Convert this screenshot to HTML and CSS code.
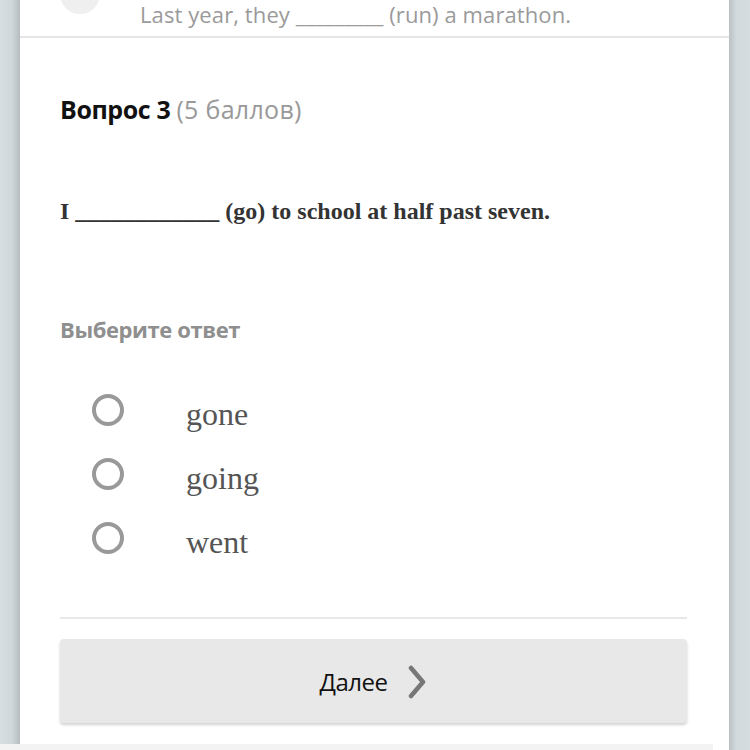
FILE: index.html
```html
<!DOCTYPE html>
<html>
<head>
<meta charset="utf-8">
<link rel="stylesheet" href="styles.css">
</head>
<body>
<div class="page">
  <div class="side left"></div>
  <main class="card">
    <div class="prev">
      <span class="prev-dot"></span>
      <span class="prev-text">Last year, they _________ (run) a marathon.</span>
    </div>
    <section class="question">
      <h2 class="q-title">Вопрос 3 <span class="q-points">(5 баллов)</span></h2>
      <p class="q-text">I ____________ (go) to school at half past seven.</p>
      <div class="q-label">Выберите ответ</div>
      <ul class="options">
        <li class="option"><span class="radio"></span><span class="opt-text">gone</span></li>
        <li class="option"><span class="radio"></span><span class="opt-text">going</span></li>
        <li class="option"><span class="radio"></span><span class="opt-text">went</span></li>
      </ul>
      <div class="divider"></div>
      <button class="next">Далее
        <svg class="chev" width="20" height="34" viewBox="0 0 20 34"><path d="M4 3 L16 17 L4 31" fill="none" stroke="#777" stroke-width="4.5" stroke-linecap="round" stroke-linejoin="round"/></svg>
      </button>
    </section>
    <div class="bottom-strip"></div>
  </main>
  <div class="side right"></div>
</div>
</body>
</html>
```

FILE: styles.css
```css
html, body {
  margin: 0;
  padding: 0;
  background: #ffffff;
}
.page {
  display: flex;
  width: 750px;
  height: 750px;
  overflow: hidden;
}
.side {
  width: 20px;
  flex: none;
}
.left {
  background: linear-gradient(to right, #d8dfe2 0%, #d0d7da 60%, #b4bcbf 100%);
}
.right {
  width: 21px;
  background: linear-gradient(to right, #b9c1c4 0%, #d2d9dc 35%, #d6dde0 100%);
}
.card {
  flex: 1;
  background: #fff;
  display: flex;
  flex-direction: column;
  font-family: "Open Sans", sans-serif;
}
.prev {
  height: 37px;
  border-bottom: 2px solid #e6e6e6;
  display: flex;
  align-items: flex-end;
  position: relative;
}
.prev-dot {
  position: absolute;
  left: 40px;
  top: -26px;
  width: 40px;
  height: 40px;
  border-radius: 50%;
  background: #efefef;
}
.prev-text {
  margin-left: 120px;
  margin-bottom: 10px;
  font-size: 22px;
  color: #9a9a9a;
  letter-spacing: 0.1px;
  line-height: 24px;
}
.question {
  padding: 0 42px 0 40px;
  display: flex;
  flex-direction: column;
}
.q-title {
  margin: 52px 0 0;
  font-size: 25px;
  font-weight: 700;
  color: #111;
  line-height: 38px;
  letter-spacing: -0.4px;
}
.q-points {
  font-weight: 400;
  color: #999;
  letter-spacing: 0.3px;
}
.q-text {
  margin: 69px 0 0;
  font-family: "Liberation Serif", serif;
  font-weight: 700;
  font-size: 24px;
  color: #333;
  line-height: 28px;
}
.q-label {
  margin-top: 89px;
  font-size: 22px;
  font-weight: 700;
  color: #8f8f8f;
  line-height: 30px;
  letter-spacing: -0.4px;
}
.options {
  list-style: none;
  margin: 48px 0 0;
  padding: 0;
  display: flex;
  flex-direction: column;
  gap: 28px;
}
.option {
  display: flex;
  align-items: center;
  height: 36px;
}
.radio {
  width: 24px;
  height: 24px;
  border: 4px solid #999;
  border-radius: 50%;
  margin-left: 32px;
  box-sizing: content-box;
  flex: none;
}
.opt-text {
  margin-left: 62px;
  font-family: "Liberation Serif", serif;
  font-size: 32px;
  color: #555;
  line-height: 36px;
  position: relative;
  top: 4px;
}
.divider {
  margin-top: 61px;
  height: 2px;
  background: #e8e8e8;
}
.next {
  margin-top: 20px;
  height: 84px;
  border: none;
  border-radius: 4px;
  background: #e8e8e8;
  box-shadow: 0 2px 3px rgba(0,0,0,0.18);
  display: flex;
  align-items: center;
  justify-content: center;
  gap: 20px;
  font-family: "Open Sans", sans-serif;
  font-size: 24px;
  color: #111;
  padding: 0;
  letter-spacing: -0.5px;
}
.chev {
  margin-top: 2px;
}
.bottom-strip {
  margin-top: 21px;
  height: 6px;
  background: #f3f3f3;
  margin-left: -20px;
  margin-right: 16px;
}
```
